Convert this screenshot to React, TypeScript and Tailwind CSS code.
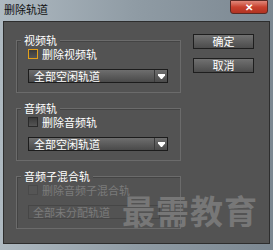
import React from 'react';

const FONT = { fontFamily: '"Noto Sans CJK SC", "Noto Sans", sans-serif' };

function Check({ label, focus, disabled }: { label: string; focus?: boolean; disabled?: boolean }) {
  return (
    <div className="flex h-[10px] items-center gap-[4px]">
      <span
        className={`h-[10px] w-[10px] shrink-0 border ${
          disabled
            ? 'border-[#4a4a4a] bg-[#555]'
            : focus
              ? 'border-[#e3a019] bg-gradient-to-b from-[#3a3a3a] to-[#555]'
              : 'border-[#2a2a2a] bg-gradient-to-b from-[#3a3a3a] to-[#555]'
        }`}
      />
      <span className={`text-[11px] leading-[10px] ${disabled ? 'text-[#7b7b7b]' : 'text-white'}`}>{label}</span>
    </div>
  );
}

function Select({ value, disabled }: { value: string; disabled?: boolean }) {
  if (disabled)
    return (
      <div className="flex h-[14px] w-[132px] items-center border border-[#464646] pl-[4px] text-[11px] leading-none text-[#7b7b7b]">
        {value}
      </div>
    );
  return (
    <div className="flex h-[14px] w-[140px] items-center border border-[#1c1c1c] bg-gradient-to-b from-[#6e6e6e] to-[#4a4a4a] text-[11px] leading-none text-white">
      <span className="flex-1 pl-[5px]">{value}</span>
      <span className="flex h-full w-[13px] items-center justify-center border-l border-[#3a3a3a]">
        <svg width="7" height="5" viewBox="0 0 7 5">
          <path d="M0 0h7v1.5L4 5H3L0 1.5z" fill="#fff" />
        </svg>
      </span>
    </div>
  );
}

function Group({ title, children }: { title: string; children: React.ReactNode }) {
  return (
    <div className="relative flex w-[165px] flex-col gap-[10px] border border-[#6b6b6b] pl-[11px] pt-[8px] pb-[9px] shadow-[inset_1px_1px_0_#444]">
      <span className="absolute -top-[6px] left-[4px] bg-[#535353] px-[3px] text-[11px] leading-[10px] text-white">
        {title}
      </span>
      {children}
    </div>
  );
}

function Btn({ label }: { label: string }) {
  return (
    <div className="flex h-[15px] w-[61px] items-center justify-center border border-[#1e1e1e] bg-gradient-to-b from-[#717171] to-[#4c4c4c] text-[11px] leading-none text-white">
      {label}
    </div>
  );
}

export default function App() {
  return (
    <div
      className="relative flex h-[250px] w-[273px] flex-col overflow-hidden bg-gradient-to-r from-[#aeb9c1] via-[#8f9ba4] to-[#7c8892]"
      style={FONT}
    >
      <div className="flex h-[21px] shrink-0 items-start justify-between pl-[4px]">
        <span className="mt-[4px] text-[11px] leading-none text-[#101010]">删除轨道</span>
        <span className="mr-[5px] flex h-[14px] w-[38px] items-center justify-center rounded-b-[3px] border border-[#5a2a24] bg-gradient-to-b from-[#e0877a] via-[#c8412e] to-[#b13322] text-[10px] font-bold leading-none text-white">
          ✕
        </span>
      </div>
      <div className="mx-[3px] flex h-[223px] border border-[#2d2d2d] bg-[#535353] pl-[12px] pt-[18px]">
        <div className="flex flex-col gap-[15px]">
          <Group title="视频轨">
            <Check label="删除视频轨" focus />
            <Select value="全部空闲轨道" />
          </Group>
          <Group title="音频轨">
            <Check label="删除音频轨" />
            <Select value="全部空闲轨道" />
          </Group>
          <Group title="音频子混合轨">
            <Check label="删除音频子混合轨" disabled />
            <Select value="全部未分配轨道" disabled />
          </Group>
        </div>
        <div className="-mt-[6px] ml-[12px] flex flex-col gap-[9px]">
          <Btn label="确定" />
          <Btn label="取消" />
        </div>
      </div>
      <span className="pointer-events-none absolute left-[122px] top-[194px] text-[33px] font-bold leading-none tracking-[1px] text-[#777]">
        最需教育
      </span>
    </div>
  );
}
